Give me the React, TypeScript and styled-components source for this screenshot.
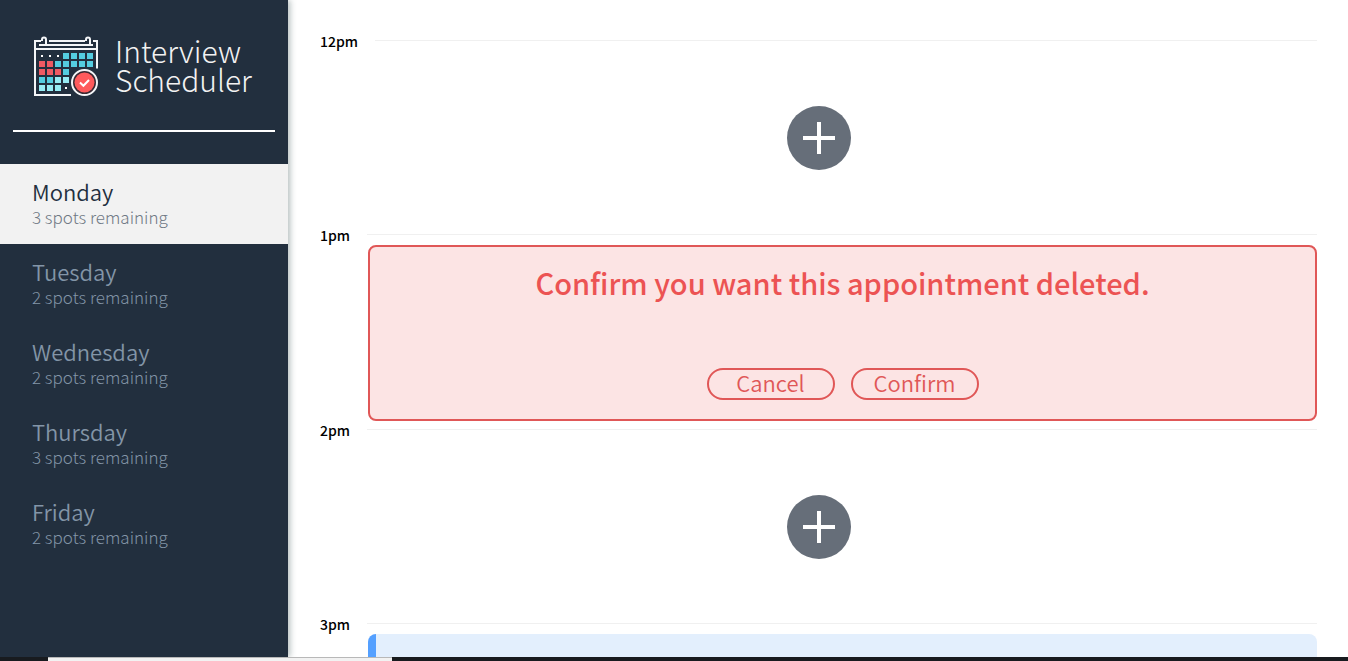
import React from "react";
import styled, { createGlobalStyle } from "styled-components";

const GlobalStyle = createGlobalStyle`
  *, *::before, *::after { box-sizing: border-box; }
  body {
    margin: 0;
    background: #fff;
    font-family: "Noto Sans CJK SC", "Noto Sans", sans-serif;
  }
`;

const Screen = styled.div`
  display: grid;
  grid-template-rows: minmax(0, 1fr) 4px;
  height: 100vh;
`;

const Layout = styled.div`
  display: flex;
  min-height: 0;
  overflow: hidden;
`;

const Sidebar = styled.aside`
  flex: 0 0 288px;
  background: #222f3e;
  box-shadow: 2px 0 6px rgba(34, 62, 62, 0.35);
`;

const Brand = styled.div`
  display: flex;
  gap: 15px;
  height: 130px;
  padding: 36px 0 0 34px;
`;

const BrandName = styled.div`
  color: #f2f2f2;
  font-size: 30px;
  font-weight: 300;
  line-height: 29px;
`;

const Divider = styled.hr`
  height: 2px;
  margin: 0 13px 32px;
  border: 0;
  background: #fff;
`;

const DayList = styled.ul`
  margin: 0;
  padding: 0;
  list-style: none;
`;

const DayButton = styled.button<{ $selected: boolean }>`
  display: block;
  width: 100%;
  height: 80px;
  padding: 0 32px;
  border: 0;
  background: ${(p) => (p.$selected ? "#f2f2f2" : "transparent")};
  color: ${(p) => (p.$selected ? "#222f3e" : "#8395a7")};
  font-family: inherit;
  text-align: left;
  cursor: pointer;
`;

const DayName = styled.span`
  display: block;
  font-size: 22px;
  font-weight: 350;
  line-height: 26px;
`;

const DaySpots = styled.span<{ $selected: boolean }>`
  display: block;
  color: ${(p) => (p.$selected ? "#6f7884" : "#8395a7")};
  font-size: 17px;
  font-weight: 250;
  line-height: 26px;
`;

const Schedule = styled.main`
  flex: 1;
  min-width: 0;
  padding: 32px 31px 0 32px;
  overflow: hidden;
`;

const SlotHeader = styled.header`
  display: flex;
  align-items: center;
  gap: 17px;
  height: 17px;
  margin-bottom: 1px;
`;

const SlotTime = styled.h4`
  margin: 0;
  padding-top: 2px;
  color: #000;
  font-size: 14px;
  font-weight: 500;
  line-height: 17px;
`;

const SlotRule = styled.hr`
  flex: 1;
  height: 1px;
  margin: 0;
  border: 0;
  background: #f0f0f0;
`;

const EmptySlot = styled.div`
  display: flex;
  align-items: center;
  justify-content: center;
  height: 176px;
`;

const AddButton = styled.button`
  display: flex;
  align-items: center;
  justify-content: center;
  width: 64px;
  height: 64px;
  padding: 0;
  border: 0;
  border-radius: 50%;
  background: #666e79;
  cursor: pointer;
`;

const ConfirmCard = styled.section`
  display: flex;
  flex-direction: column;
  align-items: center;
  justify-content: space-between;
  height: 176px;
  margin: 2px 0 0 48px;
  padding: 15px 32px 19px;
  border: 2px solid #e05757;
  border-radius: 8px;
  background: #fce4e4;
`;

const ConfirmTitle = styled.h1`
  margin: 0;
  color: #ec5353;
  font-size: 29px;
  font-weight: 500;
  line-height: 40px;
  text-align: center;
`;

const Actions = styled.div`
  display: flex;
  gap: 16px;
`;

const ActionButton = styled.button`
  display: flex;
  align-items: center;
  justify-content: center;
  width: 128px;
  height: 32px;
  padding: 0 0 4px;
  border: 2px solid #e05757;
  border-radius: 16px;
  background: transparent;
  color: #e05757;
  font-family: inherit;
  font-size: 22px;
  font-weight: 350;
  line-height: 24px;
  cursor: pointer;
`;

const BookedCard = styled.section`
  height: 176px;
  margin: 2px 0 0 48px;
  border-left: 8px solid #54a0ff;
  border-radius: 8px;
  background: #e3effd;
`;

const BottomBar = styled.div`
  padding-left: 48px;
  background: #181b1f;
`;

const BottomField = styled.div`
  width: 344px;
  height: 4px;
  border-top: 1px solid #b8b8b8;
  background: #f2f2f2;
`;

const CYAN = "#54cde0";
const AQUA = "#97ecf4";
const RED = "#ef5a63";

const calendarRows: (string | null)[][] = [
  [null, null, null, CYAN, CYAN, CYAN, CYAN],
  [RED, RED, CYAN, CYAN, CYAN, CYAN, CYAN],
  [RED, RED, RED, CYAN],
  [CYAN, CYAN, AQUA, AQUA],
  [AQUA, AQUA, AQUA, null],
];

function CalendarLogo() {
  return (
    <svg width="66" height="62" viewBox="0 0 66 62" aria-hidden="true">
      <g fill="none" stroke="#f4f6f8" strokeWidth="2">
        <path d="M7 5H1V59H37M15 5H51M59 5H63V32.5M1 13H63M5 9H59" />
        <path d="M8 5V3.5A2 2 0 0 1 12 3.5V9" />
        <path d="M52 5V3.5A2 2 0 0 1 56 3.5V9" />
      </g>
      {calendarRows.map((row, r) =>
        row.map((fill, c) =>
          fill ? (
            <rect key={`${r}-${c}`} x={5 + c * 8} y={17 + r * 8} width="6" height="6" fill={fill} />
          ) : (
            <rect key={`${r}-${c}`} x={7 + c * 8} y={19 + r * 8} width="2" height="2" fill="#fff" />
          )
        )
      )}
      <circle cx="50.5" cy="46.5" r="12.5" fill="#3a2a33" stroke="#f4f6f8" strokeWidth="2" />
      <circle cx="50.5" cy="46.5" r="10" fill="#ff5a5c" />
      <path d="M46 46.6L49.4 49.8L55 44" fill="none" stroke="#fff" strokeWidth="2" />
    </svg>
  );
}

function AddAppointment() {
  return (
    <EmptySlot>
      <AddButton type="button" aria-label="Add appointment">
        <svg width="32" height="32" viewBox="0 0 32 32" aria-hidden="true">
          <path d="M16 0V32M0 16H32" stroke="#fff" strokeWidth="4" />
        </svg>
      </AddButton>
    </EmptySlot>
  );
}

function Slot({ time, children }: { time: string; children: React.ReactNode }) {
  return (
    <article>
      <SlotHeader>
        <SlotTime>{time}</SlotTime>
        <SlotRule />
      </SlotHeader>
      {children}
    </article>
  );
}

const days = [
  { name: "Monday", spots: 3 },
  { name: "Tuesday", spots: 2 },
  { name: "Wednesday", spots: 2 },
  { name: "Thursday", spots: 3 },
  { name: "Friday", spots: 2 },
];

export default function App() {
  const [selected, setSelected] = React.useState("Monday");

  return (
    <Screen>
      <GlobalStyle />
      <Layout>
        <Sidebar>
          <Brand>
            <CalendarLogo />
            <BrandName>
              Interview
              <br />
              Scheduler
            </BrandName>
          </Brand>
          <Divider />
          <nav>
            <DayList>
              {days.map((day) => (
                <li key={day.name}>
                  <DayButton
                    type="button"
                    $selected={day.name === selected}
                    onClick={() => setSelected(day.name)}
                  >
                    <DayName>{day.name}</DayName>
                    <DaySpots $selected={day.name === selected}>
                      {day.spots} spots remaining
                    </DaySpots>
                  </DayButton>
                </li>
              ))}
            </DayList>
          </nav>
        </Sidebar>
        <Schedule>
          <Slot time="12pm">
            <AddAppointment />
          </Slot>
          <Slot time="1pm">
            <ConfirmCard>
              <ConfirmTitle>Confirm you want this appointment deleted.</ConfirmTitle>
              <Actions>
                <ActionButton type="button">Cancel</ActionButton>
                <ActionButton type="button">Confirm</ActionButton>
              </Actions>
            </ConfirmCard>
          </Slot>
          <Slot time="2pm">
            <AddAppointment />
          </Slot>
          <Slot time="3pm">
            <BookedCard />
          </Slot>
        </Schedule>
      </Layout>
      <BottomBar>
        <BottomField />
      </BottomBar>
    </Screen>
  );
}
